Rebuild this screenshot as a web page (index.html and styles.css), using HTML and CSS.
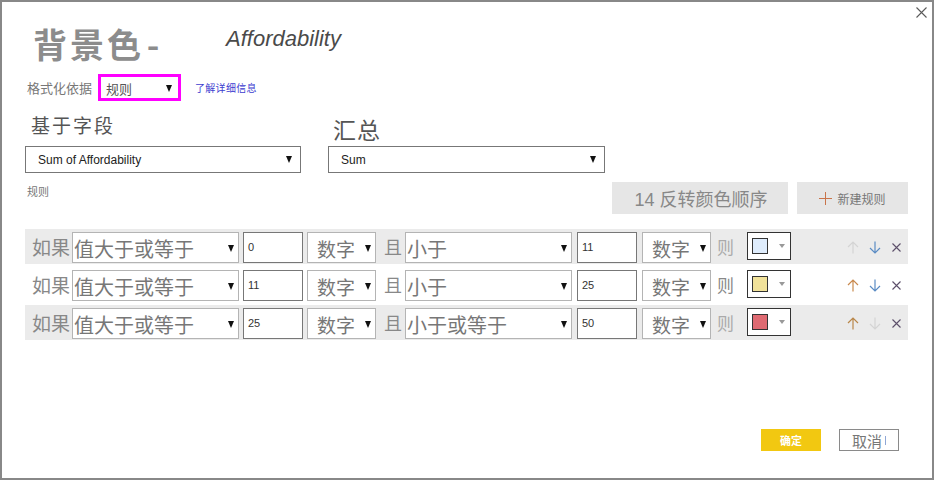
FILE: index.html
```html
<!DOCTYPE html>
<html lang="zh-CN">
<head>
<meta charset="utf-8">
<title>背景色 - Affordability</title>
<link rel="stylesheet" href="styles.css">
</head>
<body>
<div class="dialog">
  <button class="close" aria-label="关闭">
    <svg width="11" height="11" viewBox="0 0 11 11"><path d="M0.5 0.5 L10.5 10.5 M10.5 0.5 L0.5 10.5" stroke="#5a5a5a" stroke-width="1.1" fill="none"/></svg>
  </button>

  <div class="title-row">
    <h1 class="title">背景色 -</h1>
    <span class="subject">Affordability</span>
  </div>

  <div class="format-row">
    <span class="format-label">格式化依据</span>
    <div class="format-select"><span>规则</span><span class="caret"></span></div>
    <a class="learn" href="#">了解详细信息</a>
  </div>

  <div class="field-row">
    <div class="field-col">
      <div class="field-label">基于字段</div>
      <div class="dd"><span>Sum of Affordability</span><span class="caret"></span></div>
    </div>
    <div class="field-col agg">
      <div class="field-label">汇总</div>
      <div class="dd"><span>Sum</span><span class="caret"></span></div>
    </div>
  </div>

  <div class="rules-head">
    <span class="rules-label">规则</span>
    <div class="head-buttons">
      <button class="btn-gray reverse">14 反转颜色顺序</button>
      <button class="btn-gray add"><svg class="plus" width="13" height="13" viewBox="0 0 13 13"><path d="M6.5 0 V13 M0 6.5 H13" stroke="#c9744a" stroke-width="1" fill="none"/></svg>新建规则</button>
    </div>
  </div>

  <div class="rules">
    <div class="rule shaded">
      <span class="word if">如果</span>
      <div class="sel cond"><span>值大于或等于</span><span class="caret"></span></div>
      <div class="num">0</div>
      <div class="sel type"><span>数字</span><span class="caret"></span></div>
      <span class="word and">且</span>
      <div class="sel cond2"><span>小于</span><span class="caret"></span></div>
      <div class="num second">11</div>
      <div class="sel type second"><span>数字</span><span class="caret"></span></div>
      <span class="word then light">则</span>
      <div class="swatch"><span class="chip chip-blue"></span><span class="mini-caret"></span></div>
      <div class="actions">
        <svg class="arrow" width="12" height="13" viewBox="0 0 12 13"><path d="M6 12.5 V1 M1 6 L6 1 L11 6" stroke="#d4d4d4" stroke-width="1.2" fill="none"/></svg>
        <svg class="arrow" width="12" height="13" viewBox="0 0 12 13"><path d="M6 0.5 V12 M1 7 L6 12 L11 7" stroke="#5b8cc4" stroke-width="1.2" fill="none"/></svg>
        <svg class="x" width="9" height="9" viewBox="0 0 9 9"><path d="M0.5 0.5 L8.5 8.5 M8.5 0.5 L0.5 8.5" stroke="#5c4f6a" stroke-width="1.1" fill="none"/></svg>
      </div>
    </div>

    <div class="rule">
      <span class="word if">如果</span>
      <div class="sel cond"><span>值大于或等于</span><span class="caret"></span></div>
      <div class="num">11</div>
      <div class="sel type"><span>数字</span><span class="caret"></span></div>
      <span class="word and">且</span>
      <div class="sel cond2"><span>小于</span><span class="caret"></span></div>
      <div class="num second">25</div>
      <div class="sel type second"><span>数字</span><span class="caret"></span></div>
      <span class="word then">则</span>
      <div class="swatch"><span class="chip chip-yellow"></span><span class="mini-caret"></span></div>
      <div class="actions">
        <svg class="arrow" width="12" height="13" viewBox="0 0 12 13"><path d="M6 12.5 V1 M1 6 L6 1 L11 6" stroke="#c98a4e" stroke-width="1.2" fill="none"/></svg>
        <svg class="arrow" width="12" height="13" viewBox="0 0 12 13"><path d="M6 0.5 V12 M1 7 L6 12 L11 7" stroke="#5b8cc4" stroke-width="1.2" fill="none"/></svg>
        <svg class="x" width="9" height="9" viewBox="0 0 9 9"><path d="M0.5 0.5 L8.5 8.5 M8.5 0.5 L0.5 8.5" stroke="#5c4f6a" stroke-width="1.1" fill="none"/></svg>
      </div>
    </div>

    <div class="rule shaded">
      <span class="word if">如果</span>
      <div class="sel cond"><span>值大于或等于</span><span class="caret"></span></div>
      <div class="num">25</div>
      <div class="sel type"><span>数字</span><span class="caret"></span></div>
      <span class="word and">且</span>
      <div class="sel cond2"><span>小于或等于</span><span class="caret"></span></div>
      <div class="num second">50</div>
      <div class="sel type second"><span>数字</span><span class="caret"></span></div>
      <span class="word then light">则</span>
      <div class="swatch"><span class="chip chip-red"></span><span class="mini-caret"></span></div>
      <div class="actions">
        <svg class="arrow" width="12" height="13" viewBox="0 0 12 13"><path d="M6 12.5 V1 M1 6 L6 1 L11 6" stroke="#b9874a" stroke-width="1.2" fill="none"/></svg>
        <svg class="arrow" width="12" height="13" viewBox="0 0 12 13"><path d="M6 0.5 V12 M1 7 L6 12 L11 7" stroke="#d4d4d4" stroke-width="1.2" fill="none"/></svg>
        <svg class="x" width="9" height="9" viewBox="0 0 9 9"><path d="M0.5 0.5 L8.5 8.5 M8.5 0.5 L0.5 8.5" stroke="#5c4f6a" stroke-width="1.1" fill="none"/></svg>
      </div>
    </div>
  </div>

  <div class="footer">
    <button class="ok">确定</button>
    <button class="cancel">取消<span class="cursor"></span></button>
  </div>
</div>
</body>
</html>
```

FILE: styles.css
```css
html, body {
  margin: 0;
  padding: 0;
  background: #fff;
}

body {
  font-family: "Liberation Sans", "Noto Sans CJK SC", sans-serif;
  color: #555;
}

.dialog {
  position: relative;
  box-sizing: border-box;
  width: 934px;
  height: 480px;
  border: 2px solid #888;
  display: flex;
  flex-direction: column;
  padding: 0 24px 27px 23px;
}

.close {
  position: absolute;
  top: 4px;
  right: 4px;
  width: 13px;
  height: 13px;
  padding: 0;
  border: 0;
  background: none;
  display: flex;
  align-items: center;
  justify-content: center;
}

/* title */
.title-row {
  display: flex;
  align-items: flex-start;
  padding-left: 8px;
  margin-top: 22px;
  height: 44px;
}

.title {
  margin: 0;
  width: 193px;
  font-size: 34px;
  line-height: 40px;
  font-weight: bold;
  color: #8c8c8c;
  letter-spacing: 3px;
  word-spacing: -8px;
  font-family: "Noto Sans CJK SC", "Liberation Sans", sans-serif;
}

.subject {
  font-size: 22px;
  line-height: 26px;
  font-style: italic;
  color: #4a4a4a;
  margin-top: 2px;
}

/* format row */
.format-row {
  display: flex;
  align-items: center;
  margin-top: 6px;
  height: 27px;
}

.format-label {
  margin-left: 2px;
  font-size: 13px;
  color: #777;
  width: 71px;
}

.format-select {
  box-sizing: border-box;
  width: 83px;
  height: 27px;
  border: 3px solid #ff00ff;
  display: flex;
  align-items: center;
  justify-content: space-between;
  padding: 1px 6px 0 5px;
  font-size: 13px;
  color: #555;
}

.learn {
  margin-left: 14px;
  font-size: 10px;
  color: #3c3ccf;
  text-decoration: none;
  letter-spacing: 0.3px;
}

.caret {
  width: 0;
  height: 0;
  border-left: 3px solid transparent;
  border-right: 3px solid transparent;
  border-top: 7px solid #111;
  flex: none;
}

/* field row */
.field-row {
  display: flex;
  gap: 27px;
  margin-top: 14px;
}

.field-col {
  width: 276px;
}

.field-col.agg {
  width: 277px;
}

.field-label {
  height: 31px;
  padding-left: 6px;
  font-size: 19px;
  line-height: 24px;
  letter-spacing: 2px;
  color: #555;
  box-sizing: border-box;
}

.agg .field-label {
  font-size: 23px;
  line-height: 28px;
  padding-top: 2px;
  padding-left: 5px;
  letter-spacing: 1px;
}

.dd {
  box-sizing: border-box;
  height: 27px;
  border: 1px solid #777;
  display: flex;
  align-items: center;
  justify-content: space-between;
  padding: 0 8px 0 12px;
  font-size: 12px;
  color: #222;
}

/* rules header */
.rules-head {
  display: flex;
  justify-content: space-between;
  align-items: flex-start;
  margin-top: 9px;
  height: 32px;
}

.rules-label {
  margin-left: 2px;
  margin-top: 3px;
  font-size: 11px;
  line-height: 14px;
  color: #777;
}

.head-buttons {
  display: flex;
  gap: 9px;
}

.btn-gray {
  height: 32px;
  border: 0;
  background: #e6e6e6;
  font-family: inherit;
  color: #888;
  padding: 0;
  display: flex;
  align-items: center;
  justify-content: center;
}

.reverse {
  width: 176px;
  font-size: 18px;
  padding-left: 2px;
}

.add {
  width: 111px;
  font-size: 12px;
  color: #777;
  gap: 5px;
}

.plus {
  flex: none;
}

/* rules */
.rules {
  margin-top: 15px;
  display: flex;
  flex-direction: column;
  gap: 3px;
}

.rule {
  display: flex;
  align-items: flex-start;
  height: 35px;
  box-sizing: border-box;
  padding: 3px 7px 0 7px;
}

.rule.shaded {
  background: #ebebeb;
}

.word {
  height: 31px;
  line-height: 33px;
  font-size: 19px;
  color: #888;
  flex: none;
}

.word.if {
  width: 40px;
}

.word.and {
  margin-left: 8px;
  width: 21px;
  font-size: 18px;
}

.word.then {
  margin-left: 6px;
  width: 18px;
  font-size: 17px;
  color: #888;
}

.word.then.light {
  color: #aaa;
}

.sel {
  box-sizing: border-box;
  height: 31px;
  border: 1px solid #b4b4b4;
  background: #fff;
  display: flex;
  align-items: center;
  justify-content: space-between;
  padding: 2px 4px 0 1px;
  font-size: 20px;
  color: #777;
  flex: none;
}

.sel.cond {
  width: 167px;
}

.sel.cond2 {
  width: 167px;
}

.sel.type {
  width: 69px;
  margin-left: 4px;
  padding-left: 9px;
  font-size: 19px;
}

.sel.type.second {
  margin-left: 5px;
}

.num {
  box-sizing: border-box;
  width: 60px;
  height: 31px;
  margin-left: 4px;
  border: 1px solid #777;
  background: #fff;
  font-size: 11px;
  line-height: 29px;
  padding-left: 4px;
  color: #333;
  flex: none;
}

.num.second {
  margin-left: 5px;
}

.swatch {
  box-sizing: border-box;
  margin-left: 12px;
  width: 44px;
  height: 28px;
  border: 1px solid #333;
  background: #fff;
  display: flex;
  align-items: center;
  padding-left: 4px;
  gap: 11px;
  flex: none;
}

.chip {
  box-sizing: border-box;
  width: 16px;
  height: 16px;
  border: 1px solid #333;
}

.chip-blue { background: #deecfc; }
.chip-yellow { background: #f1e29a; }
.chip-red { background: #df6a72; }

.mini-caret {
  width: 0;
  height: 0;
  border-left: 3.5px solid transparent;
  border-right: 3.5px solid transparent;
  border-top: 4px solid #999;
}

.actions {
  margin-left: auto;
  display: flex;
  align-items: center;
  height: 31px;
  gap: 10px;
}

.actions .x {
  margin-left: 1px;
}

/* footer */
.footer {
  margin-top: auto;
  display: flex;
  justify-content: flex-end;
  gap: 18px;
  padding-right: 9px;
}

.ok {
  width: 60px;
  height: 22px;
  border: 0;
  background: #f2c811;
  color: #fff;
  font-weight: bold;
  font-size: 11px;
  font-family: inherit;
  padding: 0;
}

.cancel {
  box-sizing: border-box;
  width: 60px;
  height: 22px;
  border: 1px solid #8a8a8a;
  background: #fff;
  color: #777;
  font-size: 15px;
  font-family: inherit;
  padding: 0;
  display: flex;
  align-items: center;
  justify-content: center;
  gap: 3px;
}

.cursor {
  width: 1px;
  height: 9px;
  background: #8fa7d6;
}
```
